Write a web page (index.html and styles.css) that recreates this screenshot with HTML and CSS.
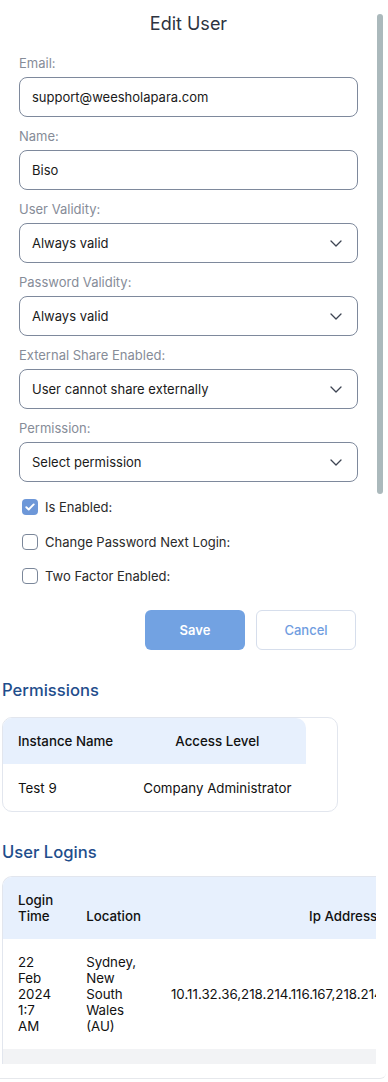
FILE: index.html
```html
<!DOCTYPE html>
<html lang="en">
<head>
<meta charset="utf-8">
<title>Edit User</title>
<link rel="stylesheet" href="styles.css">
</head>
<body>
<div class="page">
  <div class="scroll-thumb"></div>

  <form class="form">
    <h1 class="title">Edit User</h1>

    <div class="group">
      <label class="label">Email:</label>
      <div class="field">support@weesholapara.com</div>
    </div>
    <div class="group">
      <label class="label">Name:</label>
      <div class="field">Biso</div>
    </div>
    <div class="group">
      <label class="label">User Validity:</label>
      <div class="field select">Always valid
        <svg class="chev" width="12" height="7" viewBox="0 0 12 7"><path d="M1 1l5 5 5-5" fill="none" stroke="#3d4452" stroke-width="1.3" stroke-linecap="round" stroke-linejoin="round"/></svg>
      </div>
    </div>
    <div class="group">
      <label class="label">Password Validity:</label>
      <div class="field select">Always valid
        <svg class="chev" width="12" height="7" viewBox="0 0 12 7"><path d="M1 1l5 5 5-5" fill="none" stroke="#3d4452" stroke-width="1.3" stroke-linecap="round" stroke-linejoin="round"/></svg>
      </div>
    </div>
    <div class="group">
      <label class="label">External Share Enabled:</label>
      <div class="field select">User cannot share externally
        <svg class="chev" width="12" height="7" viewBox="0 0 12 7"><path d="M1 1l5 5 5-5" fill="none" stroke="#3d4452" stroke-width="1.3" stroke-linecap="round" stroke-linejoin="round"/></svg>
      </div>
    </div>
    <div class="group">
      <label class="label">Permission:</label>
      <div class="field select">Select permission
        <svg class="chev" width="12" height="7" viewBox="0 0 12 7"><path d="M1 1l5 5 5-5" fill="none" stroke="#3d4452" stroke-width="1.3" stroke-linecap="round" stroke-linejoin="round"/></svg>
      </div>
    </div>

    <div class="check-row">
      <span class="box checked">
        <svg width="10" height="8" viewBox="0 0 10 8"><path d="M1.3 4.2l2.4 2.3L8.7 1.4" fill="none" stroke="#fff" stroke-width="1.9" stroke-linecap="round" stroke-linejoin="round"/></svg>
      </span>
      <span class="check-text">Is Enabled:</span>
    </div>
    <div class="check-row">
      <span class="box"></span>
      <span class="check-text">Change Password Next Login:</span>
    </div>
    <div class="check-row">
      <span class="box"></span>
      <span class="check-text">Two Factor Enabled:</span>
    </div>

    <div class="actions">
      <button type="button" class="btn btn-save">Save</button>
      <button type="button" class="btn btn-cancel">Cancel</button>
    </div>
  </form>

  <section class="section perm-section">
    <h2 class="heading">Permissions</h2>
    <div class="perm-card">
      <table class="perm-table">
        <thead>
          <tr><th class="th-left">Instance Name</th><th class="th-last">Access Level</th></tr>
        </thead>
        <tbody>
          <tr><td>Test 9</td><td>Company Administrator</td></tr>
        </tbody>
      </table>
    </div>
  </section>

  <section class="section logins-section">
    <h2 class="heading">User Logins</h2>
    <div class="logins-card">
      <div class="logins-scroll">
        <table class="logins-table">
          <thead>
            <tr><th class="col-first">Login Time</th><th>Location</th><th class="th-center">Ip Address</th></tr>
          </thead>
          <tbody>
            <tr>
              <td class="col-first">22 Feb 2024 1:7 AM</td>
              <td>Sydney, New South Wales (AU)</td>
              <td class="nowrap">10.11.32.36,218.214.116.167,218.214.116.167,172.16.254.101</td>
            </tr>
          </tbody>
        </table>
      </div>
      <div class="hscroll"></div>
    </div>
  </section>
  <div class="page-bottom"></div>
</div>
</body>
</html>
```
FILE: styles.css
```css
* { box-sizing: border-box; }
html, body { margin: 0; padding: 0; background: #fff; }
body {
  font-family: Inter, "Noto Sans", "Liberation Sans", sans-serif;
  color: #1a1a1a;
  width: 388px;
  overflow: hidden;
}
.page {
  position: relative;
  width: 388px;
  height: 1082px;
  overflow: hidden;
}
.scroll-thumb {
  position: absolute;
  left: 377px;
  top: 14px;
  width: 6px;
  height: 480px;
  border-radius: 3px;
  background: #abb9bc;
}
.form {
  width: 376px;
  padding: 12px 18px 0 19px;
}
.title {
  margin: 0 0 19px;
  font-size: 18px;
  line-height: 24px;
  font-weight: 400;
  text-align: center;
  color: #2d3340;
}
.group { margin-bottom: 11px; }
.label {
  display: block;
  font-size: 13px;
  line-height: 16px;
  color: #868c98;
  margin-bottom: 6px;
}
.field {
  position: relative;
  height: 40px;
  border: 1px solid #7e899c;
  border-radius: 8px;
  padding: 0 12px;
  display: flex;
  align-items: center;
  font-size: 13px;
  color: #1a1a1a;
}
.chev {
  position: absolute;
  right: 15px;
  top: 16px;
}
.check-row {
  height: 28px;
  margin-bottom: 6.5px;
  display: flex;
  align-items: center;
  padding-left: 3px;
}
.box {
  width: 16px;
  height: 16px;
  border: 1.5px solid #7b879a;
  border-radius: 4px;
  display: flex;
  align-items: center;
  justify-content: center;
  margin-right: 7px;
  background: #fff;
}
.box.checked {
  border: none;
  background: #6d97d8;
}
.check-text {
  font-size: 13px;
  color: #2a2a2a;
}
.actions {
  display: flex;
  justify-content: flex-end;
  gap: 11px;
  margin-top: 19.5px;
  padding-right: 2px;
}
.btn {
  width: 100px;
  height: 40px;
  border-radius: 6px;
  font-family: inherit;
  font-size: 13px;
}
.btn-save {
  background: #72a2e2;
  border: none;
  color: #fff;
  font-weight: 600;
}
.btn-cancel {
  background: #fff;
  border: 1px solid #d6deec;
  color: #6f9de0;
  font-weight: 500;
}
.section { padding-left: 2px; }
.heading {
  margin: 0;
  font-size: 16.6px;
  line-height: 22px;
  font-weight: 500;
  color: #1f4e8c;
}
.perm-section { margin-top: 29px; }
.perm-section .heading { margin-bottom: 16px; }
.perm-card {
  width: 336px;
  border: 1px solid #e2e6ee;
  border-radius: 10px;
  overflow: hidden;
}
table { border-collapse: collapse; font-size: 13.3px; }
th, td { padding: 15px 15px; line-height: 16px; }
th { font-weight: 500; background: #e7f0fd; color: #111; }
td { color: #111; }
.perm-table th { text-align: center; }
.perm-table th.th-left { text-align: left; }
.perm-table th.th-last { border-top-right-radius: 10px; }
.perm-table td { text-align: left; padding-top: 16px; padding-bottom: 15px; }
.logins-section { margin-top: 29px; }
.logins-section .heading { margin-bottom: 13px; }
.logins-card {
  width: 374px;
  border-left: 1px solid #e2e6ee;
  border-top: 1px solid #e2e6ee;
  border-top-left-radius: 10px;
  overflow: hidden;
}
.logins-scroll { overflow: hidden; }
.logins-table { width: 100%; }
.logins-table th { text-align: left; vertical-align: bottom; }
.logins-table th.th-center { text-align: center; }
.logins-table td { vertical-align: middle; text-align: left; }
.logins-table .col-first { padding-right: 18px; }
.nowrap { white-space: nowrap; }
.hscroll {
  height: 15px;
  background: #f2f3f5;
}
.page-bottom {
  width: 386px;
  height: 15px;
  border-bottom: 1px solid #e6e8ec;
  border-bottom-right-radius: 6px;
}
```
